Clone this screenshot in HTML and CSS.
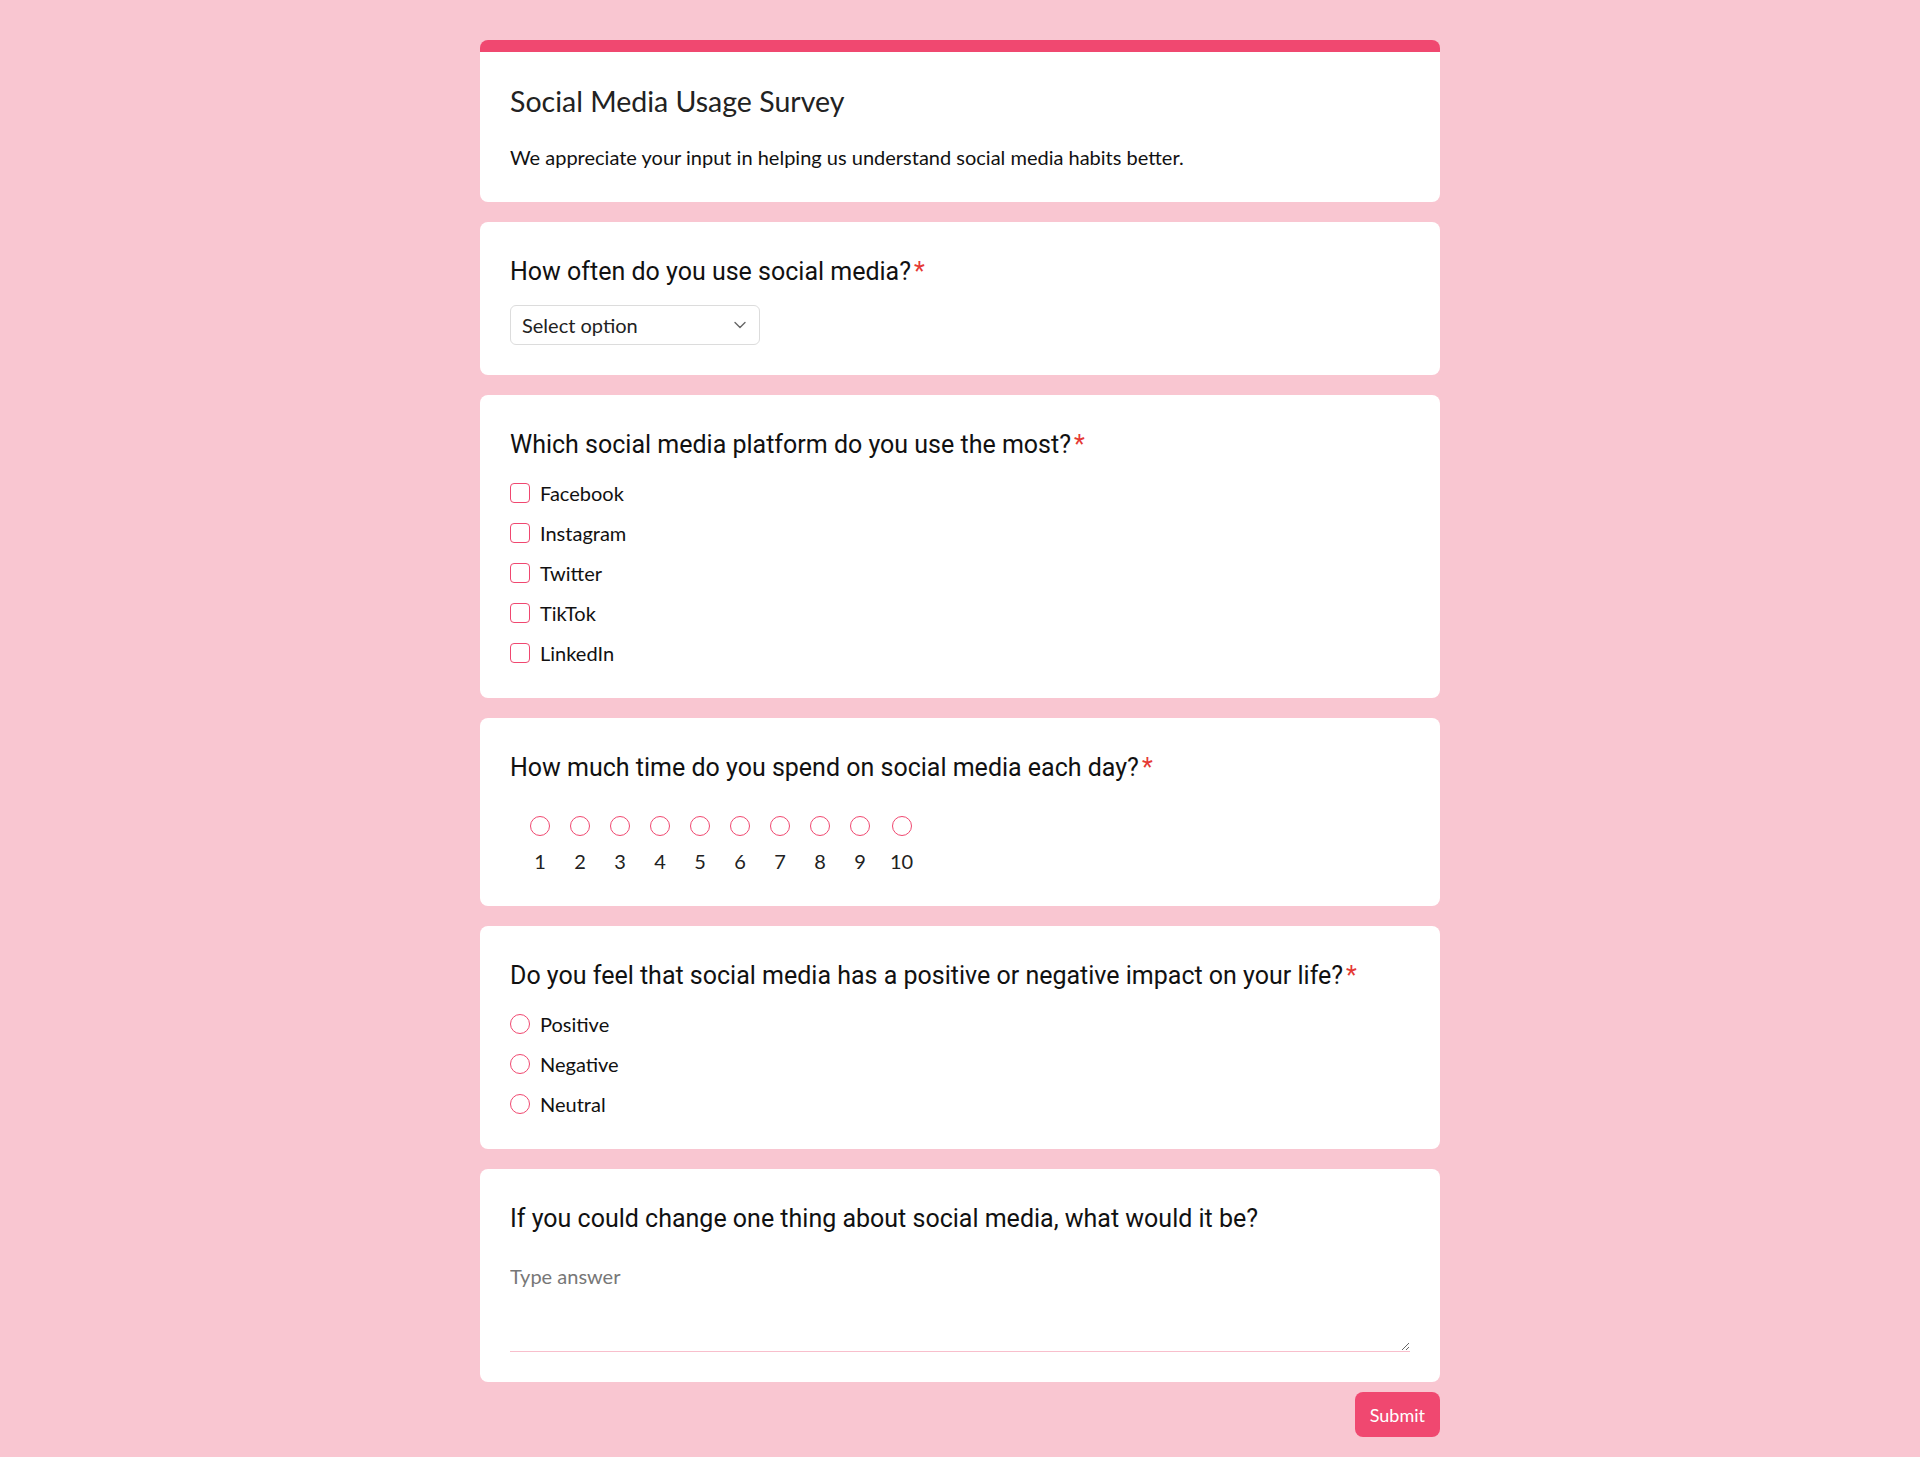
FILE: index.html
```html
<!DOCTYPE html>
<html lang="en">
<head>
<meta charset="utf-8">
<title>Social Media Usage Survey</title>
<link rel="stylesheet" href="styles.css">
</head>
<body>
<form class="page">
  <div class="cards">
    <section class="card card--header">
      <h1 class="title">Social Media Usage Survey</h1>
      <p class="desc">We appreciate your input in helping us understand social media habits better.</p>
    </section>

    <section class="card">
      <h2 class="question">How often do you use social media?<span class="req">*</span></h2>
      <div class="select-wrap">
        <select class="select">
          <option>Select option</option>
          <option>Several times a day</option>
          <option>Once a day</option>
          <option>A few times a week</option>
          <option>Rarely</option>
        </select>
        <svg class="chevron" width="12" height="8" viewBox="0 0 12 8" aria-hidden="true"><path d="M1 1.5 L6 6.5 L11 1.5" fill="none" stroke="#666" stroke-width="1.4" stroke-linecap="round" stroke-linejoin="round"/></svg>
      </div>
    </section>

    <section class="card">
      <h2 class="question">Which social media platform do you use the most?<span class="req">*</span></h2>
      <div class="options">
        <label class="option"><input type="checkbox" class="box"><span>Facebook</span></label>
        <label class="option"><input type="checkbox" class="box"><span>Instagram</span></label>
        <label class="option"><input type="checkbox" class="box"><span>Twitter</span></label>
        <label class="option"><input type="checkbox" class="box"><span>TikTok</span></label>
        <label class="option"><input type="checkbox" class="box"><span>LinkedIn</span></label>
      </div>
    </section>

    <section class="card">
      <h2 class="question">How much time do you spend on social media each day?<span class="req">*</span></h2>
      <div class="scale">
        <label class="scale-item"><input type="radio" name="time" class="dot"><span>1</span></label>
        <label class="scale-item"><input type="radio" name="time" class="dot"><span>2</span></label>
        <label class="scale-item"><input type="radio" name="time" class="dot"><span>3</span></label>
        <label class="scale-item"><input type="radio" name="time" class="dot"><span>4</span></label>
        <label class="scale-item"><input type="radio" name="time" class="dot"><span>5</span></label>
        <label class="scale-item"><input type="radio" name="time" class="dot"><span>6</span></label>
        <label class="scale-item"><input type="radio" name="time" class="dot"><span>7</span></label>
        <label class="scale-item"><input type="radio" name="time" class="dot"><span>8</span></label>
        <label class="scale-item"><input type="radio" name="time" class="dot"><span>9</span></label>
        <label class="scale-item"><input type="radio" name="time" class="dot"><span>10</span></label>
      </div>
    </section>

    <section class="card">
      <h2 class="question">Do you feel that social media has a positive or negative impact on your life?<span class="req">*</span></h2>
      <div class="options">
        <label class="option"><input type="radio" name="impact" class="dot"><span>Positive</span></label>
        <label class="option"><input type="radio" name="impact" class="dot"><span>Negative</span></label>
        <label class="option"><input type="radio" name="impact" class="dot"><span>Neutral</span></label>
      </div>
    </section>

    <section class="card">
      <h2 class="question">If you could change one thing about social media, what would it be?</h2>
      <textarea class="answer" placeholder="Type answer"></textarea>
    </section>
  </div>
  <div class="actions">
    <button type="button" class="submit">Submit</button>
  </div>
</form>
</body>
</html>
```

FILE: styles.css
```css
* { box-sizing: border-box; }

body {
  margin: 0;
  background: #f9c6d1;
  font-family: Lato, "Open Sans", Arial, sans-serif;
  color: #1a1a1a;
}

.page {
  width: 960px;
  margin: 0 auto;
  padding: 40px 0 21px;
  display: flex;
  flex-direction: column;
}

.cards {
  display: flex;
  flex-direction: column;
  gap: 20px;
}

.card {
  background: #fff;
  border-radius: 8px;
  padding: 30px;
}

.card--header {
  border-top: 12px solid #f04870;
}

.title {
  margin: 0 0 22px;
  font-family: Lato, "Noto Sans", sans-serif;
  font-weight: 400;
  font-size: 28.5px;
  line-height: 38px;
  color: #222;
}

.desc {
  margin: 0;
  font-size: 20px;
  line-height: 30px;
  color: #111;
}

.question {
  margin: 0 0 15px;
  padding-top: 2px;
  font-family: Roboto, Arial, sans-serif;
  font-weight: 400;
  font-size: 25px;
  line-height: 36px;
  color: #111;
}

.req {
  color: #e53935;
  margin-left: 3px;
}

.select-wrap {
  position: relative;
  width: 250px;
  height: 40px;
}

.select {
  appearance: none;
  -webkit-appearance: none;
  width: 100%;
  height: 100%;
  border: 1px solid #dcdcdc;
  border-radius: 6px;
  background: #fff;
  padding: 0 36px 0 11px;
  font-family: Lato, sans-serif;
  font-size: 20px;
  color: #222;
}

.chevron {
  position: absolute;
  right: 14px;
  top: 16px;
  pointer-events: none;
}

.options {
  display: flex;
  flex-direction: column;
  gap: 10px;
}

.option {
  display: flex;
  align-items: center;
  gap: 10px;
  height: 30px;
  font-size: 20px;
  color: #111;
}

.box,
.dot {
  appearance: none;
  -webkit-appearance: none;
  margin: 0;
  width: 20px;
  height: 20px;
  border: 1.5px solid #f04870;
  background: #fff;
  flex: none;
}

.box { border-radius: 4px; }
.dot { border-radius: 50%; }

.scale {
  display: flex;
  gap: 20px;
  padding: 15px 20px 0;
}

.scale-item {
  display: flex;
  flex-direction: column;
  align-items: center;
  gap: 10px;
  font-size: 20px;
  line-height: 30px;
  color: #222;
}

.answer {
  display: block;
  width: 100%;
  height: 100px;
  padding: 12px 0;
  border: none;
  border-bottom: 1px solid #f8bfcc;
  outline: none;
  resize: vertical;
  font-family: Lato, sans-serif;
  font-size: 20px;
  color: #111;
  background: transparent;
}

.answer::placeholder {
  color: #777;
}

.actions {
  display: flex;
  justify-content: flex-end;
  padding-top: 10px;
}

.submit {
  height: 45px;
  padding: 0 15px;
  border: none;
  border-radius: 8px;
  background: #f04870;
  color: #fff;
  font-family: Lato, sans-serif;
  font-size: 18px;
}
```
